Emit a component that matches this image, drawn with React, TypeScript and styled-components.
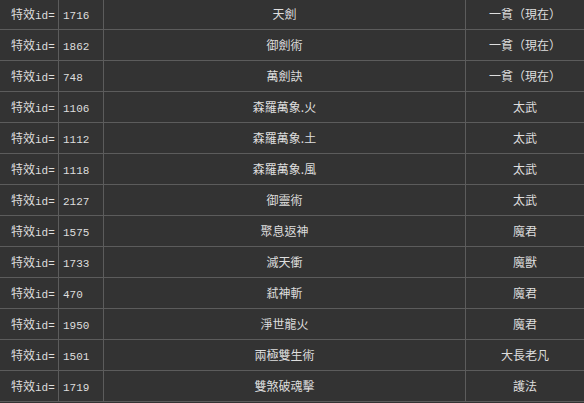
import React from "react";
import styled, { createGlobalStyle } from "styled-components";

const Global = createGlobalStyle`
  html, body { margin: 0; padding: 0; background: #333333; overflow: hidden; }
  body { font-family: "Noto Sans CJK TC", "Noto Sans CJK SC", sans-serif; }
`;

const Table = styled.div`
  display: grid;
  grid-template-columns: 58px 44px 361px 1fr;
  grid-auto-rows: 30px;
  gap: 1px;
  background: #5c5c5c;
  margin-top: -1px;
  border-bottom: 1px solid #5c5c5c;
`;

const Cell = styled.div<{ $align: "left" | "center"; $pad?: number }>`
  background: #333333;
  color: #dedede;
  font-size: 12px;
  line-height: 30px;
  text-align: ${(p) => p.$align};
  padding-left: ${(p) => p.$pad ?? 0}px;
  white-space: nowrap;
  overflow: hidden;
`;

const Mono = styled.span`
  font-family: "Liberation Mono", "DejaVu Sans Mono", monospace;
  font-size: 11px;
`;

const rows: [string, string, string][] = [
  ["1716", "天劍", "一貧（現在）"],
  ["1862", "御劍術", "一貧（現在）"],
  ["748", "萬劍訣", "一貧（現在）"],
  ["1106", "森羅萬象.火", "太武"],
  ["1112", "森羅萬象.土", "太武"],
  ["1118", "森羅萬象.風", "太武"],
  ["2127", "御靈術", "太武"],
  ["1575", "聚息返神", "魔君"],
  ["1733", "滅天衝", "魔獸"],
  ["470", "弒神斬", "魔君"],
  ["1950", "淨世龍火", "魔君"],
  ["1501", "兩極雙生術", "大長老凡"],
  ["1719", "雙煞破魂擊", "護法"],
];

export default function App() {
  return (
    <>
      <Global />
      <Table>
        {rows.map(([id, name, owner]) => (
          <React.Fragment key={id}>
            <Cell $align="left" $pad={11}>
              特效<Mono>id=</Mono>
            </Cell>
            <Cell $align="left" $pad={4}>
              <Mono>{id}</Mono>
            </Cell>
            <Cell $align="center">{name}</Cell>
            <Cell $align="center">{owner}</Cell>
          </React.Fragment>
        ))}
      </Table>
    </>
  );
}
